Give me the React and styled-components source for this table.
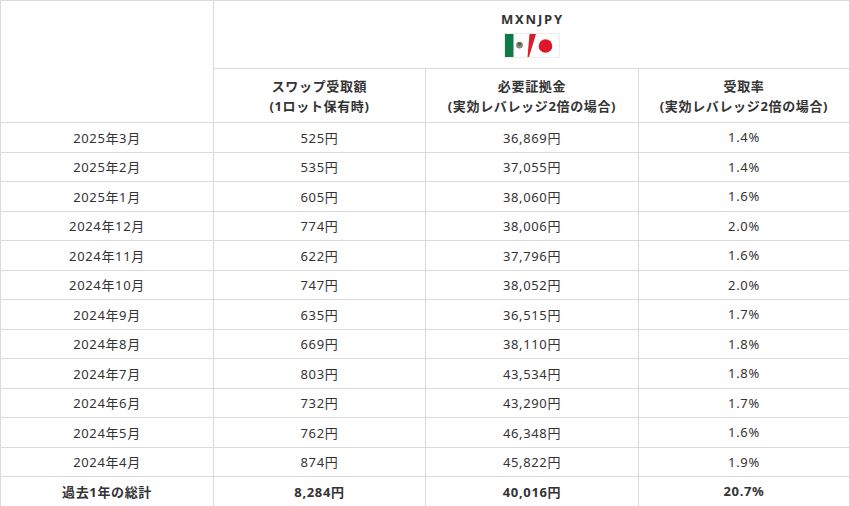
import React from 'react';
import styled, { createGlobalStyle } from 'styled-components';

const GlobalStyle = createGlobalStyle`
  html, body {
    margin: 0;
    padding: 0;
    background: #ffffff;
  }
  body {
    font-family: "Noto Sans", "Noto Sans CJK JP", sans-serif;
    color: #333333;
  }
`;

const rows = [
  ['2025年3月', '525円', '36,869円', '1.4%'],
  ['2025年2月', '535円', '37,055円', '1.4%'],
  ['2025年1月', '605円', '38,060円', '1.6%'],
  ['2024年12月', '774円', '38,006円', '2.0%'],
  ['2024年11月', '622円', '37,796円', '1.6%'],
  ['2024年10月', '747円', '38,052円', '2.0%'],
  ['2024年9月', '635円', '36,515円', '1.7%'],
  ['2024年8月', '669円', '38,110円', '1.8%'],
  ['2024年7月', '803円', '43,534円', '1.8%'],
  ['2024年6月', '732円', '43,290円', '1.7%'],
  ['2024年5月', '762円', '46,348円', '1.6%'],
  ['2024年4月', '874円', '45,822円', '1.9%'],
];

const total = ['過去1年の総計', '8,284円', '40,016円', '20.7%'];

const App = () => {
  return (
    <>
      <GlobalStyle />
      <Table>
        <colgroup>
          <col style={{ width: '213px' }} />
          <col style={{ width: '212px' }} />
          <col style={{ width: '213px' }} />
          <col />
        </colgroup>
        <thead>
          <tr>
            <HeadCell rowSpan={2} />
            <PairCell colSpan={3}>
              <PairName>MXNJPY</PairName>
              <Flag />
            </PairCell>
          </tr>
          <tr>
            <HeadCell>
              スワップ受取額
              <br />
              (1ロット保有時)
            </HeadCell>
            <HeadCell>
              必要証拠金
              <br />
              (実効レバレッジ2倍の場合)
            </HeadCell>
            <HeadCell>
              受取率
              <br />
              (実効レバレッジ2倍の場合)
            </HeadCell>
          </tr>
        </thead>
        <tbody>
          {rows.map((r) => (
            <tr key={r[0]}>
              {r.map((v, i) => (
                <Cell key={i}>{v}</Cell>
              ))}
            </tr>
          ))}
          <tr>
            {total.map((v, i) => (
              <Cell key={i} bold>
                {v}
              </Cell>
            ))}
          </tr>
        </tbody>
      </Table>
    </>
  );
};

export default App;

// メキシコ / 日本 の国旗
const Flag = () => (
  <FlagBox>
    <svg width="54" height="23" viewBox="0 0 54 23">
      <rect x="0" y="0" width="54" height="23" fill="#ffffff" />
      <rect x="0" y="0" width="8.5" height="23" fill="#0f7a47" />
      <ellipse cx="14.5" cy="11" rx="3.4" ry="3.2" fill="#8a8a7a" />
      <ellipse cx="14.5" cy="10" rx="1.9" ry="1.7" fill="#5c5c4a" />
      <path d="M11.6 13 Q14.5 15.2 17.4 13" stroke="#6f9a6a" strokeWidth="1" fill="none" />
      <polygon points="24.5,0 31,0 24,23 22.5,23" fill="#d81f2a" />
      <circle cx="40.5" cy="12" r="6.8" fill="#e0162b" />
    </svg>
  </FlagBox>
);

// styled component

const Table = styled.table`
  width: 850px;
  border-collapse: collapse;
  table-layout: fixed;
  font-size: 13px;
  letter-spacing: 0.05em;
  color: #333333;
`;

const HeadCell = styled.th`
  border: 1px solid #dadada;
  height: 53px;
  padding: 0;
  text-align: center;
  vertical-align: middle;
  font-weight: 700;
  line-height: 20px;
`;

const PairCell = styled.th`
  border: 1px solid #dadada;
  height: 64px;
  padding: 3px 0 0;
  text-align: center;
  vertical-align: middle;
`;

const PairName = styled.div`
  font-weight: 700;
  font-size: 13px;
  letter-spacing: 0.14em;
  line-height: 16px;
  margin-bottom: 6px;
  padding-left: 2px;
`;

const FlagBox = styled.div`
  display: inline-block;
  width: 54px;
  height: 23px;
  border: 1px solid #ececec;
  line-height: 0;
  svg {
    display: block;
  }
`;

const Cell = styled.td`
  border: 1px solid #dadada;
  height: 28.5px;
  padding: 0;
  text-align: center;
  vertical-align: middle;
  font-weight: ${(props) => (props.bold ? 700 : 400)};
`;
